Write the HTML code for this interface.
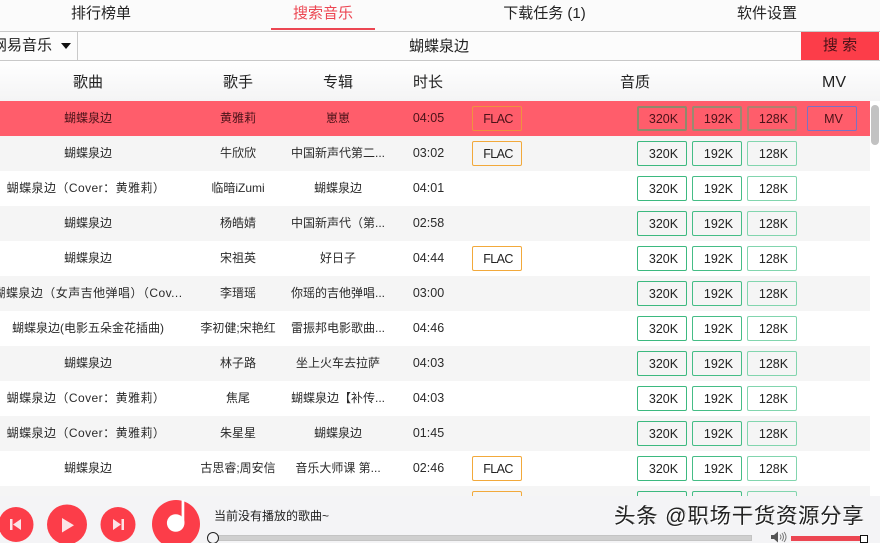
<!DOCTYPE html>
<html><head><meta charset="utf-8"><style>
*{box-sizing:border-box}
html,body{margin:0;padding:0;width:880px;height:543px;overflow:hidden;background:#fff}
body{position:relative;font-family:"Liberation Sans","Noto Sans CJK SC",sans-serif;color:#222}
.a{position:absolute;white-space:nowrap}
.c{text-align:center;transform:translateX(-50%)}
.nav{top:4px;font-size:15px;line-height:20px}
.row{position:absolute;left:0;width:870px;height:35px}
.row.g{background:#f5f5f5}
.row.s{background:#ff5d6b}
.row span{position:absolute;top:0;line-height:35px;font-size:12px;white-space:nowrap;transform:translateX(-50%);color:#2a2a2a}
.row span.t{font-size:12.5px}
.row span.w{letter-spacing:.45px}
.row.s span{color:#4a1218}
.row b{position:absolute;top:5px;height:25px;font-weight:400;font-size:12.5px;line-height:24px;text-align:center;padding-left:3px;border:1px solid #3cb97f;border-radius:2px;background:transparent;color:#222}
.row b.f{left:472px;width:50px;border-color:#f2a93b;padding-left:2px;letter-spacing:-.6px}
.row b.h{left:637px;width:50px}
.row b.m{left:692px;width:50px;border-color:#45bd86}
.row b.l{left:747px;width:50px;border-color:#82d5ae}
.row.s b{color:#4a1218}
.row.s b.f{border-color:#f0913f}
.row.s b.h{border:2px solid #8f8a6c;line-height:22px}
.row.s b.m{border:2px solid #9a8a70;line-height:22px}
.row.s b.l{border:2px solid #b0806e;line-height:22px}
.row.s b.v{left:807px;width:50px;border-color:#7a72c4}
.hd{top:73px;font-size:15px;line-height:20px;color:#222}
</style></head><body>
<div class="a" style="left:0;top:0;width:880px;height:31px;background:#fbfbfb"></div>
<div class="a nav c" style="left:101px">排行榜单</div>
<div class="a nav c" style="left:323px;color:#ec4652">搜索音乐</div>
<div class="a nav c" style="left:544.500px">下载任务 (1)</div>
<div class="a nav c" style="left:767px">软件设置</div>
<div class="a" style="left:271px;top:28px;width:104px;height:2px;background:#ec4652"></div>

<div class="a" style="left:0;top:31px;width:880px;height:30px;background:#fcfcfc;border-top:1px solid #c9c9c9;border-bottom:1px solid #c9c9c9"></div>
<div class="a" style="left:77px;top:32px;width:1px;height:28px;background:#c9c9c9"></div>
<div class="a" style="left:-8px;top:36px;font-size:15px;line-height:20px">网易音乐</div>
<div class="a" style="left:61px;top:43px;width:0;height:0;border-left:5.500px solid transparent;border-right:5.500px solid transparent;border-top:6px solid #111"></div>
<div class="a c" style="left:439px;top:37px;font-size:15px;line-height:20px">蝴蝶泉边</div>
<div class="a" style="left:801px;top:32px;width:78px;height:28px;background:#fc3d49;color:#4a1218;font-size:15px;line-height:28px;text-align:center">搜 索</div>

<div class="a" style="left:0;top:61px;width:880px;height:40px;background:linear-gradient(#fff,#f4f4f5)"></div>
<div class="a hd c" style="left:88px">歌曲</div>
<div class="a hd c" style="left:238px">歌手</div>
<div class="a hd c" style="left:338px">专辑</div>
<div class="a hd c" style="left:428px">时长</div>
<div class="a hd c" style="left:635px">音质</div>
<div class="a hd c" style="left:834px;font-size:16px">MV</div>

<div class="row s" style="top:101px"><span style="left:88px">蝴蝶泉边</span><span style="left:238px">黄雅莉</span><span style="left:338px">崽崽</span><span class="t" style="left:428.500px">04:05</span><b class="f">FLAC</b><b class="h">320K</b><b class="m">192K</b><b class="l">128K</b><b class="v">MV</b></div>
<div class="row g" style="top:136px"><span style="left:88px">蝴蝶泉边</span><span style="left:238px">牛欣欣</span><span style="left:338px">中国新声代第二...</span><span class="t" style="left:428.500px">03:02</span><b class="f">FLAC</b><b class="h">320K</b><b class="m">192K</b><b class="l">128K</b></div>
<div class="row" style="top:171px"><span class="w" style="left:86px">蝴蝶泉边（Cover：黄雅莉）</span><span style="left:238px">临暗iZumi</span><span style="left:338px">蝴蝶泉边</span><span class="t" style="left:428.500px">04:01</span><b class="h">320K</b><b class="m">192K</b><b class="l">128K</b></div>
<div class="row g" style="top:206px"><span style="left:88px">蝴蝶泉边</span><span style="left:238px">杨皓婧</span><span style="left:338px">中国新声代（第...</span><span class="t" style="left:428.500px">02:58</span><b class="h">320K</b><b class="m">192K</b><b class="l">128K</b></div>
<div class="row" style="top:241px"><span style="left:88px">蝴蝶泉边</span><span style="left:238px">宋祖英</span><span style="left:338px">好日子</span><span class="t" style="left:428.500px">04:44</span><b class="f">FLAC</b><b class="h">320K</b><b class="m">192K</b><b class="l">128K</b></div>
<div class="row g" style="top:276px"><span class="w" style="left:88px">蝴蝶泉边（女声吉他弹唱）（Cov...</span><span style="left:238px">李瑨瑶</span><span style="left:338px">你瑶的吉他弹唱...</span><span class="t" style="left:428.500px">03:00</span><b class="h">320K</b><b class="m">192K</b><b class="l">128K</b></div>
<div class="row" style="top:311px"><span style="left:88px">蝴蝶泉边(电影五朵金花插曲)</span><span style="left:238px">李初健;宋艳红</span><span style="left:338px">雷振邦电影歌曲...</span><span class="t" style="left:428.500px">04:46</span><b class="h">320K</b><b class="m">192K</b><b class="l">128K</b></div>
<div class="row g" style="top:346px"><span style="left:88px">蝴蝶泉边</span><span style="left:238px">林子路</span><span style="left:338px">坐上火车去拉萨</span><span class="t" style="left:428.500px">04:03</span><b class="h">320K</b><b class="m">192K</b><b class="l">128K</b></div>
<div class="row" style="top:381px"><span class="w" style="left:86px">蝴蝶泉边（Cover：黄雅莉）</span><span style="left:238px">焦尾</span><span style="left:338px">蝴蝶泉边【补传...</span><span class="t" style="left:428.500px">04:03</span><b class="h">320K</b><b class="m">192K</b><b class="l">128K</b></div>
<div class="row g" style="top:416px"><span class="w" style="left:86px">蝴蝶泉边（Cover：黄雅莉）</span><span style="left:238px">朱星星</span><span style="left:338px">蝴蝶泉边</span><span class="t" style="left:428.500px">01:45</span><b class="h">320K</b><b class="m">192K</b><b class="l">128K</b></div>
<div class="row" style="top:451px"><span style="left:88px">蝴蝶泉边</span><span style="left:238px">古思睿;周安信</span><span style="left:338px">音乐大师课 第...</span><span class="t" style="left:428.500px">02:46</span><b class="f">FLAC</b><b class="h">320K</b><b class="m">192K</b><b class="l">128K</b></div>
<div class="row g" style="top:486px"><b class="f">FLAC</b><b class="h">320K</b><b class="m">192K</b><b class="l">128K</b></div>

<div class="a" style="left:871px;top:105px;width:8px;height:40px;border-radius:4px;background:#c2c2c2"></div>

<div class="a" style="left:0;top:496px;width:880px;height:47px;background:#f4f4f6"></div>
<svg class="a" style="left:0;top:490px" width="240" height="53" viewBox="0 0 240 53">
<circle cx="16" cy="34.500" r="17.500" fill="#fc3d49"/>
<path d="M10 29h2.500v11H10zM21 29v11l-8-5.500z" fill="#fbe4e6"/>
<circle cx="67" cy="34.500" r="20" fill="#fc3d49"/>
<path d="M62 28v14.500l12-7.200z" fill="#fbe4e6"/>
<circle cx="118" cy="34.500" r="17.500" fill="#fc3d49"/>
<path d="M113 29l8 5.500-8 5.500zM121.500 29h2.500v11h-2.500z" fill="#fbe4e6"/>
<circle cx="176" cy="34" r="24" fill="#fc3d49"/>
<circle cx="175.700" cy="33" r="8.800" fill="#fff"/>
<path d="M181.600 33V10h2.700v23z" fill="#fff"/>
</svg>
<div class="a" style="left:214px;top:507px;font-size:12px;line-height:18px;color:#222">当前没有播放的歌曲~</div>
<div class="a" style="left:218px;top:535px;width:534px;height:6px;background:#cfcfcf;border:1px solid #c4c4c4"></div>
<div class="a" style="left:207px;top:532px;width:12px;height:12px;border-radius:50%;background:#f4f4f6;border:1.500px solid #222"></div>

<svg class="a" style="left:770px;top:531px" width="18" height="12" viewBox="0 0 18 12">
<path d="M1 4h3l4-3.500v11L4 8H1z" fill="#555"/>
<path d="M10 3.500q2 2.500 0 5M12 2q3 4 0 8M14 1q4 5 0 10" fill="none" stroke="#777" stroke-width="1"/>
</svg>
<div class="a" style="left:791px;top:536px;width:70px;height:5px;background:#ec4652"></div>
<div class="a" style="left:860px;top:535px;width:8px;height:8px;background:#fff;border:1.500px solid #111"></div>

<div class="a" style="left:614px;top:502px;font-size:21px;line-height:30px;letter-spacing:1.1px;color:#222;text-shadow:1px 1px 0 #fff,-1px 0 0 #fff,1px 0 0 #777">头条 @职场干货资源分享</div>
</body></html>
